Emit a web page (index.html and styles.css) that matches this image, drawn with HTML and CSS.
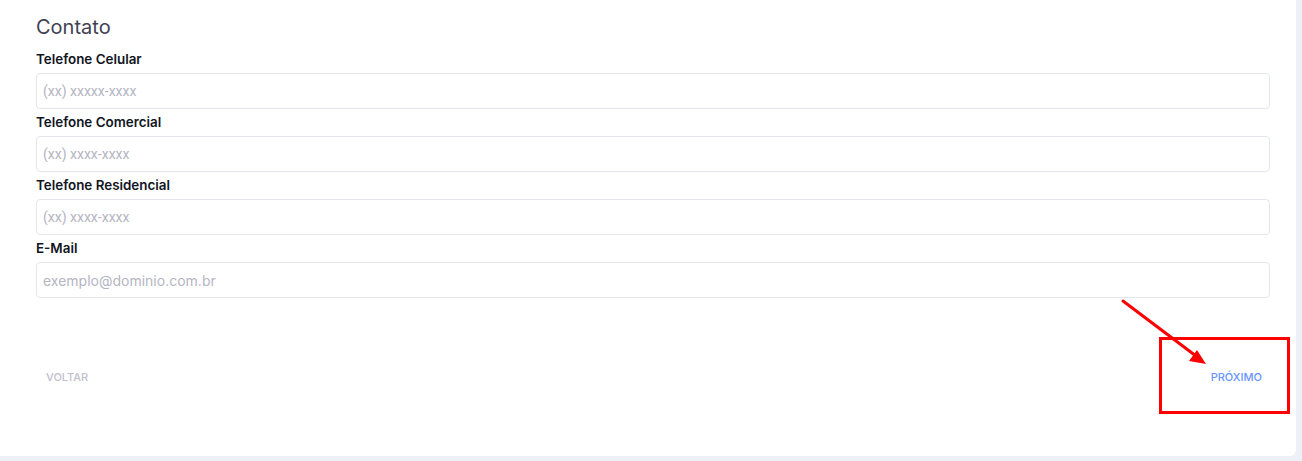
FILE: index.html
```html
<!DOCTYPE html>
<html lang="pt-BR">
<head>
<meta charset="utf-8">
<title>Contato</title>
<link rel="stylesheet" href="styles.css">
</head>
<body>
<div class="card">
  <h3 class="title">Contato</h3>
  <div class="group">
    <label class="label">Telefone Celular</label>
    <input class="input" type="text" placeholder="(xx) xxxxx-xxxx">
  </div>
  <div class="group">
    <label class="label">Telefone Comercial</label>
    <input class="input" type="text" placeholder="(xx) xxxx-xxxx">
  </div>
  <div class="group">
    <label class="label">Telefone Residencial</label>
    <input class="input" type="text" placeholder="(xx) xxxx-xxxx">
  </div>
  <div class="group">
    <label class="label">E-Mail</label>
    <input class="input input-email" type="text" placeholder="exemplo@dominio.com.br">
  </div>
  <div class="actions">
    <button class="btn btn-back" type="button">Voltar</button>
    <button class="btn btn-next" type="button">Próximo</button>
  </div>
</div>
<div class="highlight-box"></div>
<svg class="annotation" width="1302" height="461" viewBox="0 0 1302 461">
  <line x1="1123" y1="301" x2="1196" y2="356" stroke="#ff0000" stroke-width="3" stroke-linecap="round"/>
  <polygon points="1206,364 1189,361 1197,350" fill="#ff0000"/>
</svg>
</body>
</html>
```
FILE: styles.css
```css
html, body {
  margin: 0;
  padding: 0;
}
body {
  background: #eef0f8;
  width: 1302px;
  height: 461px;
  overflow: hidden;
  position: relative;
  font-family: Inter, "Open Sans", sans-serif;
}
.card {
  width: 1296px;
  height: 456px;
  box-sizing: border-box;
  background: #ffffff;
  border-radius: 0 0 6px 0;
  padding: 15px 26px 0 36px;
}
.title {
  margin: 0 0 7px 0;
  font-family: Inter, sans-serif;
  font-weight: 400;
  font-size: 20px;
  line-height: 24px;
  color: #3f4254;
}
.group {
  display: flex;
  flex-direction: column;
}
.label {
  margin: 4px 0 4px 0;
  font-size: 13.4px;
  line-height: 19px;
  font-weight: 600;
  color: #111522;
}
.input {
  height: 36px;
  box-sizing: border-box;
  border: 1px solid #e4e6ef;
  border-radius: 4px;
  padding: 0 6px;
  font-family: Roboto, sans-serif;
  font-size: 14px;
  color: #3f4254;
  outline: none;
  background: #fff;
}
.input::placeholder {
  color: #b5b5c3;
}
.input-email {
  font-family: Inter, sans-serif;
  font-size: 14px;
}
.actions {
  display: flex;
  justify-content: space-between;
  margin-top: 62px;
  margin-right: -2px;
}
.btn {
  border: none;
  background: transparent;
  font-family: Inter, sans-serif;
  font-size: 11px;
  font-weight: 500;
  text-transform: uppercase;
  padding: 10px;
  line-height: 14px;
  cursor: pointer;
}
.btn-back {
  color: #c0c0cc;
}
.btn-next {
  color: #6993ff;
}
.highlight-box {
  position: absolute;
  left: 1159px;
  top: 337px;
  width: 131px;
  height: 77px;
  box-sizing: border-box;
  border: 3px solid #ff0000;
}
.annotation {
  position: absolute;
  left: 0;
  top: 0;
  pointer-events: none;
}
```
